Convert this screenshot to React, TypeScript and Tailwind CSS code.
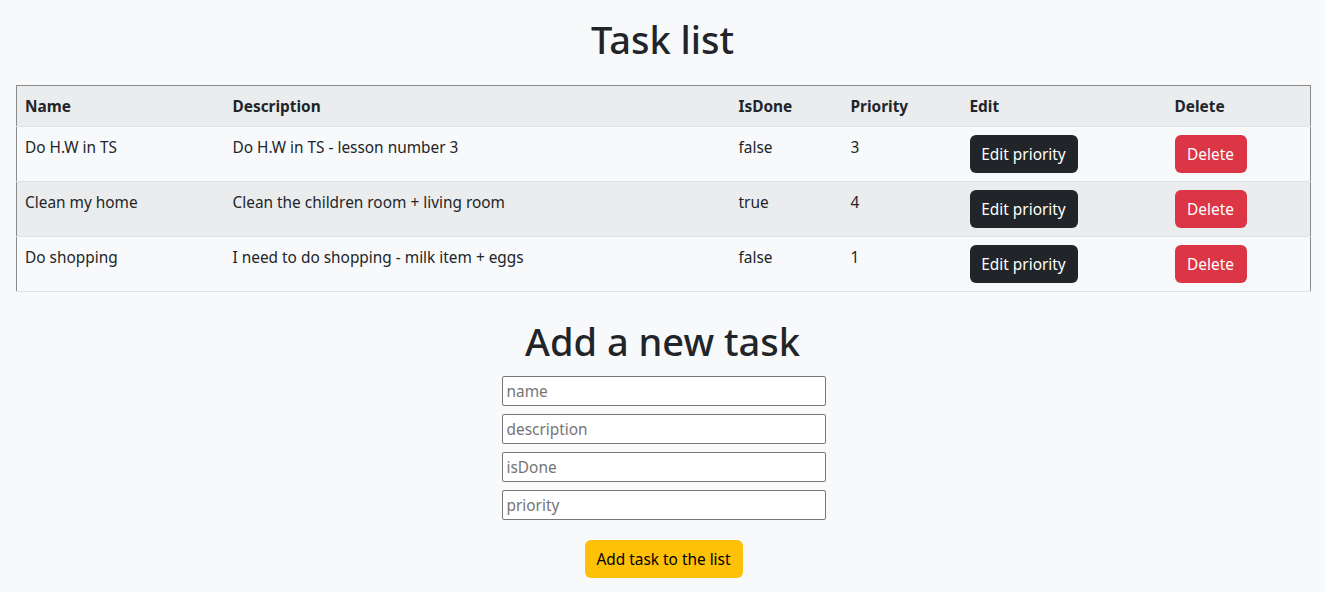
import React from "react";

const tasks = [
  { name: "Do H.W in TS", description: "Do H.W in TS - lesson number 3", isDone: "false", priority: "3" },
  { name: "Clean my home", description: "Clean the children room + living room", isDone: "true", priority: "4" },
  { name: "Do shopping", description: "I need to do shopping - milk item + eggs", isDone: "false", priority: "1" },
];

export default function App() {
  return (
    <div
      className="min-h-[592px] bg-[#f8f9fa] text-[#212529] text-[15.4px]"
      style={{ fontFamily: '"Segoe UI", "Noto Sans", sans-serif' }}
    >
      <div className="pt-[15px] flex flex-col items-center">
        <h1 className="text-[38px] leading-[48px] font-medium m-0">Task list</h1>
      </div>
      <div className="mt-[22px] pl-4 pr-[14px]">
        <table className="w-full border-collapse table-fixed">
          <colgroup>
            <col className="w-[208px]" />
            <col className="w-[506px]" />
            <col className="w-[112px]" />
            <col className="w-[119px]" />
            <col className="w-[205px]" />
            <col />
          </colgroup>
          <thead>
            <tr className="bg-[#ebeced] border-t border-l border-r border-[#8a8a8a]">
              {["Name", "Description", "IsDone", "Priority", "Edit", "Delete"].map((h) => (
                <th key={h} className="text-left font-bold px-2 pt-[9px] pb-[7px] leading-6 border-b border-[#dee2e6]">
                  {h}
                </th>
              ))}
            </tr>
          </thead>
          <tbody>
            {tasks.map((t, i) => (
              <tr
                key={t.name}
                className={`${i % 2 === 1 ? "bg-[#ebeced]" : "bg-[#f8f9fa]"} border-l border-r border-l-[#8a8a8a] border-r-[#8a8a8a] border-b border-b-[#dee2e6]`}
              >
                <td className="px-2 pt-[9px] pb-2 align-top leading-6 h-[55px]">{t.name}</td>
                <td className="px-2 pt-[9px] pb-2 align-top leading-6">{t.description}</td>
                <td className="px-2 pt-[9px] pb-2 align-top leading-6">{t.isDone}</td>
                <td className="px-2 pt-[9px] pb-2 align-top leading-6">{t.priority}</td>
                <td className="px-2 pt-2 pb-2 align-top">
                  <button className="h-[38px] w-[108px] pt-[1px] rounded-[6px] bg-[#212529] text-white leading-6">
                    Edit priority
                  </button>
                </td>
                <td className="px-2 pt-2 pb-2 align-top">
                  <button className="h-[38px] w-[72px] pt-[1px] rounded-[6px] bg-[#dc3545] text-white leading-6">
                    Delete
                  </button>
                </td>
              </tr>
            ))}
          </tbody>
        </table>
      </div>
      <div className="flex flex-col items-center mt-[25px]">
        <h1 className="text-[38px] leading-[48px] font-medium m-0">Add a new task</h1>
        <div className="mt-[11px] flex flex-col gap-2 pl-[2px]">
          {["name", "description", "isDone", "priority"].map((p) => (
            <input
              key={p}
              placeholder={p}
              className="w-[324px] h-[30px] bg-white border border-[#767676] rounded-[2px] px-[4px] text-[15.4px] placeholder:text-[#757575] outline-none"
            />
          ))}
        </div>
        <button className="mt-5 ml-[2px] h-[38px] w-[158px] pt-[1px] rounded-[6px] bg-[#ffc107] text-black leading-6">
          Add task to the list
        </button>
      </div>
    </div>
  );
}
